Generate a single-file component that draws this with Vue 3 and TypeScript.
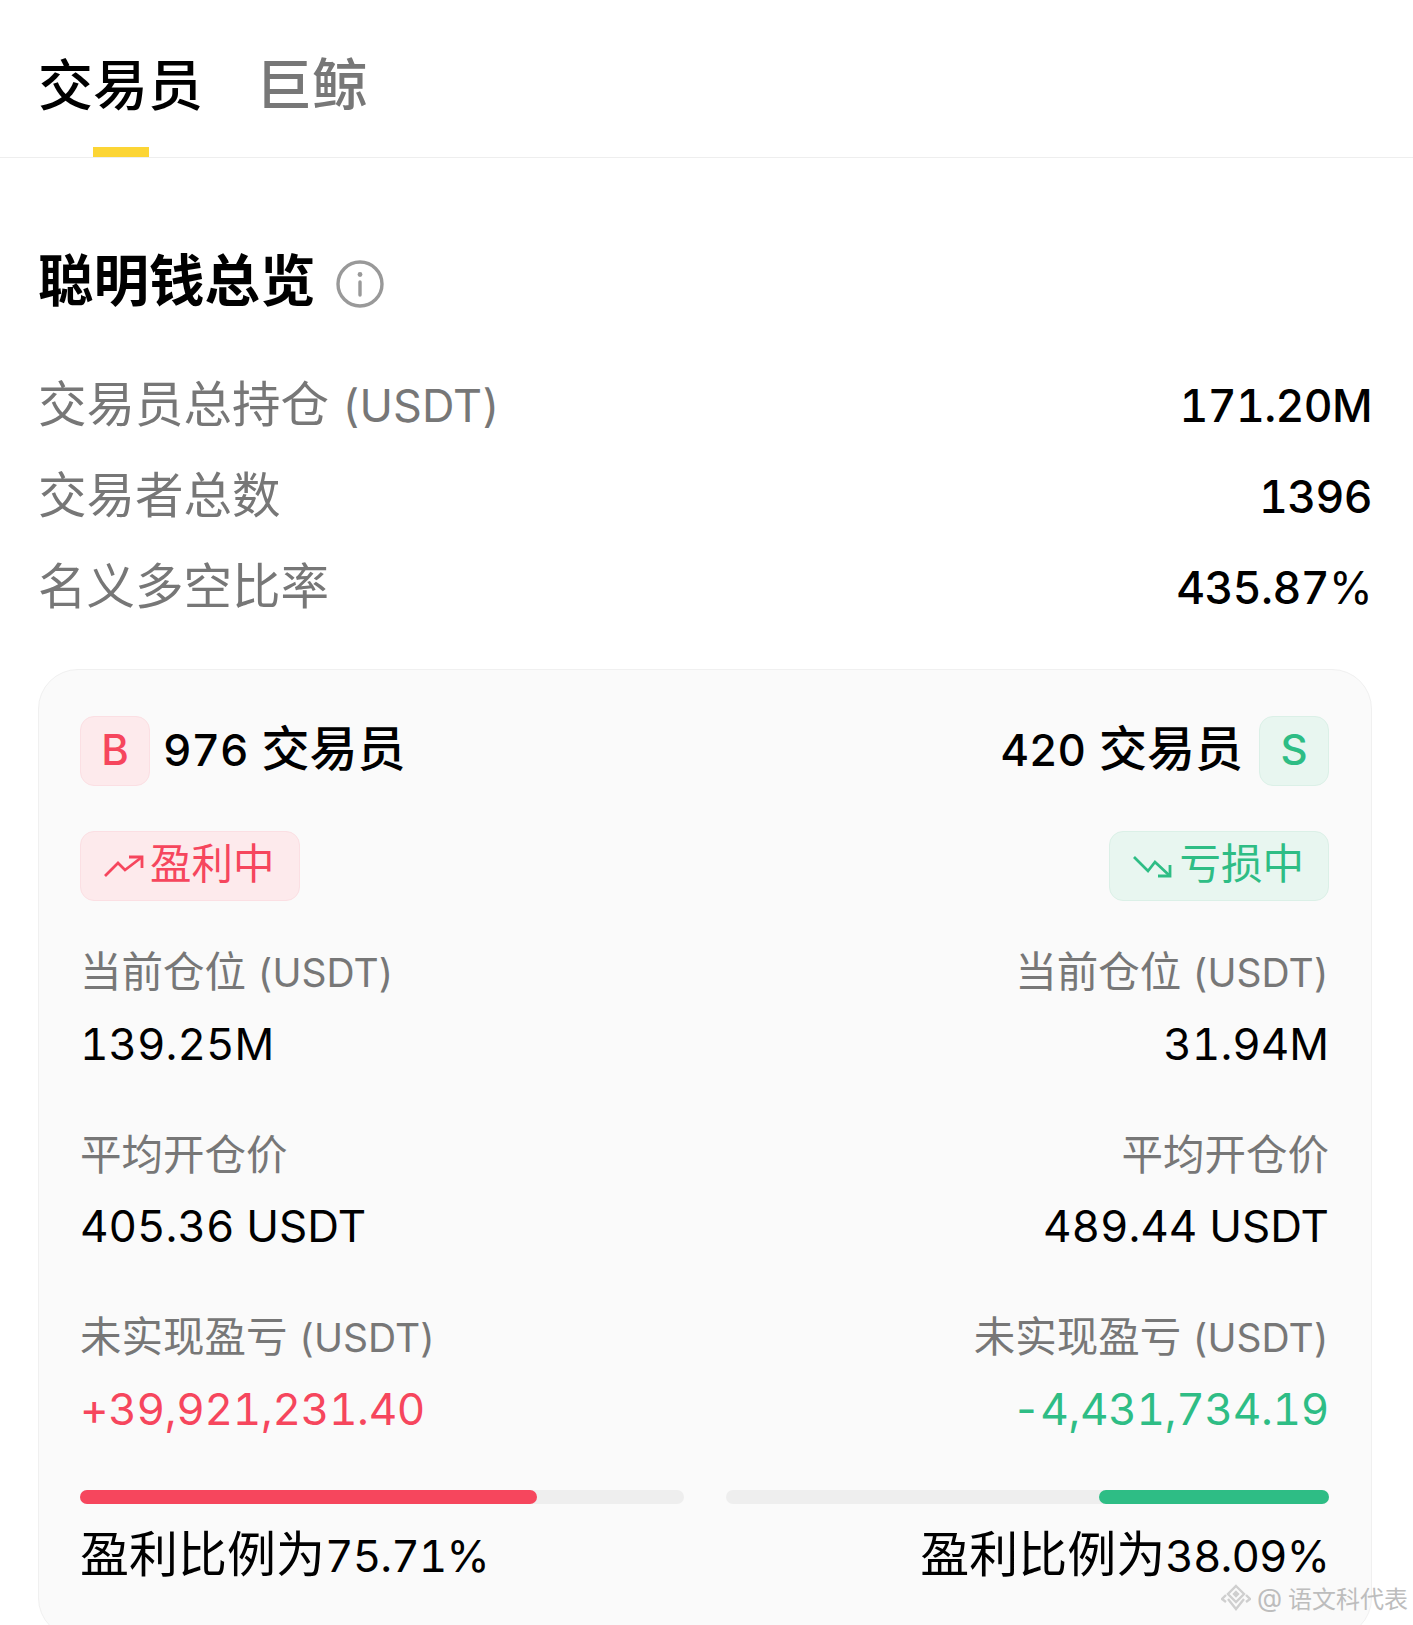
<script setup lang="ts">
interface Side {
  kind: 'long' | 'short'
  position: string
  entry: string
  pnl: string
  ratio: string
  fill: number
}

const overview = [
  { label: '交易员总持仓', unit: '(USDT)', value: '171.20M', pct: '' },
  { label: '交易者总数', unit: '', value: '1396', pct: '' },
  { label: '名义多空比率', unit: '', value: '435.87', pct: '%' },
]

const sides: Side[] = [
  { kind: 'long', position: '139.25M', entry: '405.36 USDT', pnl: '+39,921,231.40', ratio: '75.71%', fill: 75.71 },
  { kind: 'short', position: '31.94M', entry: '489.44 USDT', pnl: '-4,431,734.19', ratio: '38.09%', fill: 38.09 },
]
</script>

<template>
  <div class="page">
    <nav class="tabs">
      <div class="tab active">交易员<span class="tab-bar"></span></div>
      <div class="tab whale">巨鲸</div>
    </nav>

    <section class="overview">
      <h2 class="title">
        聪明钱总览
        <svg class="info" viewBox="0 0 48 48" fill="none" stroke="#999" stroke-width="3.4">
          <circle cx="24" cy="24" r="22" />
          <path d="M24 22v13" stroke-linecap="round" />
          <circle cx="24" cy="14.5" r="2.4" fill="#999" stroke="none" />
        </svg>
      </h2>
      <div v-for="row in overview" :key="row.label" class="row">
        <span class="row-label">{{ row.label }} <span class="unit">{{ row.unit }}</span></span>
        <span class="row-value">{{ row.value }}<span class="pct">{{ row.pct }}</span></span>
      </div>
    </section>

    <section class="card">
      <div class="head">
        <div class="count">
          <span class="badge long">B</span>
          <span class="count-text"><span class="num">976</span> 交易员</span>
        </div>
        <div class="count right">
          <span class="count-text"><span class="num">420</span> 交易员</span>
          <span class="badge short">S</span>
        </div>
      </div>

      <div class="head">
        <div class="pill long">
          <svg class="trend" viewBox="0 0 40 26" fill="none" stroke="currentColor" stroke-width="2.8">
            <path d="M1 22 L14 9 L21 16 L38 3" />
            <path d="M25 3 H38 V14" />
          </svg>
          <span class="pill-text">盈利中</span>
        </div>
        <div class="pill short">
          <svg class="trend" viewBox="0 0 40 26" fill="none" stroke="currentColor" stroke-width="2.8">
            <path d="M1 3 L15 17 L22 8 L37 22" />
            <path d="M25 22 H37 V11" />
          </svg>
          <span class="pill-text">亏损中</span>
        </div>
      </div>

      <div class="cols">
        <div v-for="side in sides" :key="side.kind" class="col" :class="side.kind">
          <div class="stat first">
            <div class="stat-label">当前仓位 <span class="stat-unit">(USDT)</span></div>
            <div class="stat-value">{{ side.position }}</div>
          </div>
          <div class="stat">
            <div class="stat-label">平均开仓价</div>
            <div class="stat-value">{{ side.entry }}</div>
          </div>
          <div class="stat">
            <div class="stat-label">未实现盈亏 <span class="stat-unit">(USDT)</span></div>
            <div class="stat-value pnl">{{ side.pnl }}</div>
          </div>
          <div class="track">
            <div class="fill" :style="{ width: side.fill + '%' }"></div>
          </div>
          <div class="ratio">盈利比例为<span class="ratio-num">{{ side.ratio }}</span></div>
        </div>
      </div>
    </section>

    <div class="watermark">
      <svg class="wm-icon" viewBox="0 0 30 28" fill="none" stroke="#cfcfcf" stroke-width="2.4">
        <path d="M15 2 L23 10 L15 18 L7 10 Z" />
        <path d="M7 15 L15 25 L23 15" />
        <path d="M5 11 L1 15 L5 18 M25 11 L29 15 L25 18" />
        <path d="M15 8 L17 10 L15 12 L13 10 Z" fill="#cfcfcf" />
      </svg>
      <span class="wm-at">@</span>
      <span>语文科代表</span>
    </div>
  </div>
</template>

<style>
html,
body {
  margin: 0;
  background: #fff;
  overflow: hidden;
}
</style>

<style scoped>
.page {
  position: relative;
  height: 1625px;
  overflow: hidden;
  background: #fff;
  color: #000;
  font-family: Inter, "Noto Sans CJK SC", sans-serif;
  font-variant-numeric: tabular-nums;
}

.tabs {
  display: flex;
  gap: 53px;
  height: 158px;
  box-sizing: border-box;
  padding: 53px 38px 0;
  border-bottom: 1px solid #eeeeee;
}

.tab {
  position: relative;
  font-size: 55px;
  line-height: 64px;
  color: #777;
  height: 104px;
  font-weight: 500;
}

.tab.whale {
  font-size: 56px;
}

.tab.active {
  color: #000;
}

.tab-bar {
  position: absolute;
  left: 55px;
  bottom: 0;
  width: 56px;
  height: 10px;
  background: #fcd535;
}

.overview {
  padding: 92px 41px 0 38px;
}

.title {
  display: flex;
  align-items: center;
  gap: 20px;
  margin: 0 0 47px;
  font-size: 55.5px;
  line-height: 62px;
  font-weight: 700;
}

.info {
  width: 48px;
  height: 48px;
  margin-top: 6px;
}

.row {
  display: flex;
  justify-content: space-between;
  align-items: baseline;
  height: 91px;
  font-size: 48.5px;
  line-height: 91px;
}

.row-label {
  color: #777;
}

.unit {
  font-size: 45px;
}

.row-value {
  font-size: 44.5px;
  font-weight: 500;
  letter-spacing: -0.6px;
}

.pct {
  font-weight: 400;
}

.card {
  margin: 37px 41px 0 38px;
  padding: 46px 42px 48px 41px;
  background: #fafafa;
  border: 1px solid #f0f0f0;
  border-radius: 40px;
}

.head {
  display: flex;
  justify-content: space-between;
  margin-bottom: 45px;
}

.head + .head {
  margin-bottom: 41px;
}

.count {
  display: flex;
  align-items: center;
  gap: 13px;
  font-size: 48px;
  font-weight: 500;
  line-height: 68px;
}

.count.right {
  gap: 16px;
}

.count-text {
  margin-top: -4px;
}

.num {
  font-size: 44px;
}

.badge {
  display: flex;
  align-items: center;
  justify-content: center;
  width: 70px;
  height: 70px;
  box-sizing: border-box;
  padding-bottom: 3px;
  border-radius: 14px;
  font-size: 42px;
}

.badge.long,
.pill.long {
  color: #f6465d;
  background: #fdeaec;
  border: 1px solid #fbdfe3;
}

.badge.short,
.pill.short {
  color: #2ebd85;
  background: #e8f6f0;
  border: 1px solid #dbf0e7;
}

.pill {
  display: flex;
  align-items: center;
  gap: 6px;
  height: 70px;
  box-sizing: border-box;
  padding: 0 24px 0 23px;
  border-radius: 14px;
  font-size: 41.5px;
}

.pill-text {
  margin-top: -10px;
}

.trend {
  width: 40px;
  height: 26px;
  margin-top: 2px;
}

.cols {
  display: grid;
  grid-template-columns: 1fr 1fr;
  gap: 42px;
}

.col.short {
  text-align: right;
}

.stat {
  margin-top: 51px;
}

.stat.first {
  margin-top: 0;
}

.stat-label {
  font-size: 41.5px;
  line-height: 60px;
  color: #777;
}

.stat-unit {
  font-size: 39px;
}

.stat-value {
  margin-top: 11px;
  font-size: 44px;
  line-height: 60px;
}

.pnl {
  letter-spacing: -0.3px;
}

.col.long .pnl {
  color: #f6465d;
}

.col.short .pnl {
  color: #2ebd85;
}

.track {
  display: flex;
  height: 14px;
  margin-top: 51px;
  border-radius: 7px;
  background: #eeeeee;
}

.col.short .track {
  justify-content: flex-end;
}

.fill {
  border-radius: 7px;
}

.col.long .fill {
  background: #f6465d;
}

.col.short .fill {
  background: #2ebd85;
}

.ratio {
  margin-top: 18px;
  font-size: 49px;
  line-height: 66px;
}

.ratio-num {
  font-size: 44px;
  letter-spacing: -0.9px;
}

.watermark {
  position: absolute;
  right: 5px;
  bottom: 10px;
  display: flex;
  align-items: center;
  gap: 6px;
  font-size: 24px;
  color: #bdbdbd;
}

.wm-at {
  font-size: 26px;
}

.wm-icon {
  width: 30px;
  height: 28px;
}
</style>
